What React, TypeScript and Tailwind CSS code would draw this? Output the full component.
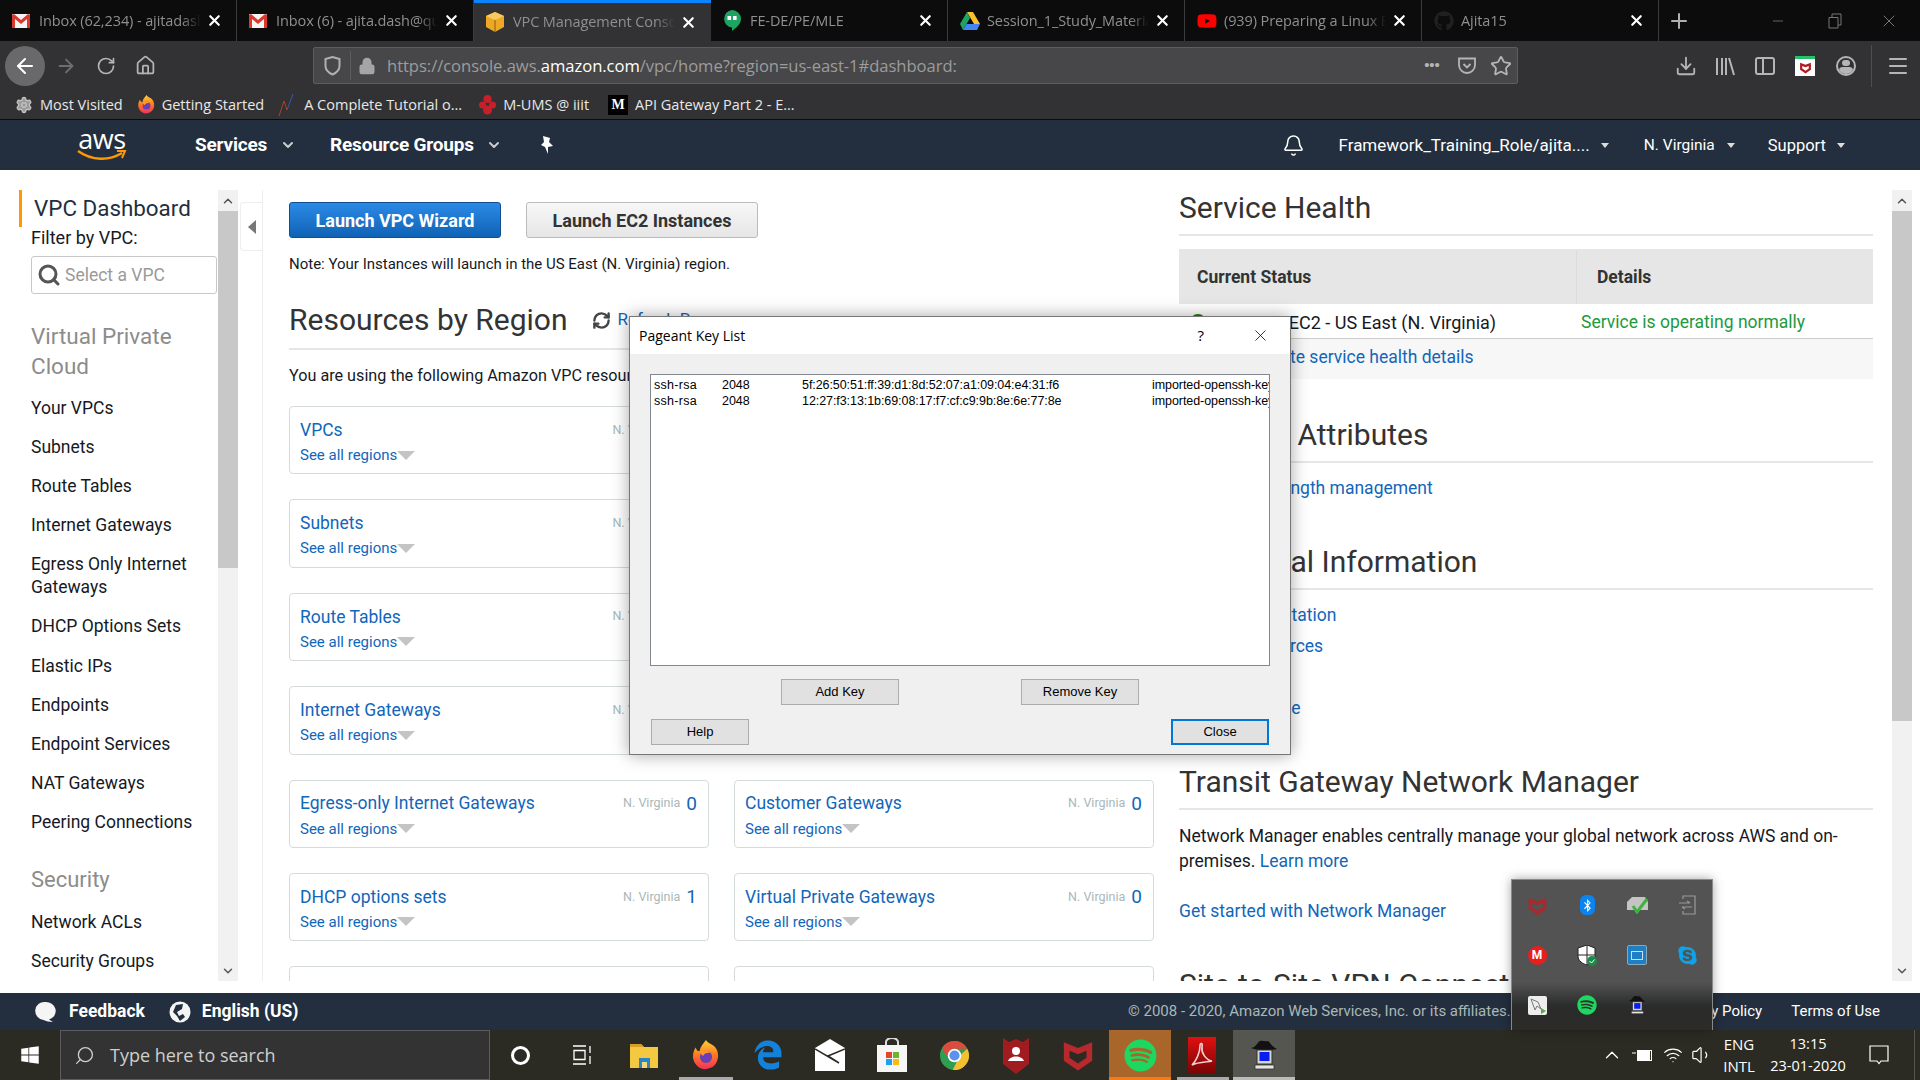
import React from "react";
import {
  ArrowLeft,
  ArrowRight,
  Bell,
  ChevronDown,
  ChevronUp,
  Download,
  Home,
  Lock,
  Menu,
  Minus,
  Plus,
  RefreshCw,
  RotateCw,
  Search,
  Settings,
  Star,
  Volume1,
  Wifi,
  X,
} from "lucide-react";
import { FaBluetoothB, FaGithub, FaSkype, FaSpotify, FaWindows, FaYoutube } from "react-icons/fa";
import { FaEdgeLegacy } from "react-icons/fa6";

function GmailIcon() {
  return (
    <svg width="18" height="16" viewBox="0 0 18 16">
      <rect x="0" y="1" width="18" height="14" rx="1" fill="#f4f4f4" />
      <path d="M0 2 L2 1 L9 7 L16 1 L18 2 V15 H15 V6 L9 11 L3 6 V15 H0Z" fill="#d93a30" />
    </svg>
  );
}

function CubeIcon() {
  return (
    <svg width="18" height="20" viewBox="0 0 18 20">
      <path d="M9 0 L18 4 V15 L9 20 L0 15 V4Z" fill="#eea825" />
      <path d="M9 0 L18 4 L9 8 L0 4Z" fill="#f7ca5e" />
      <path d="M9 8 V20" stroke="#8a5c10" strokeWidth="1" />
    </svg>
  );
}

function HangoutsIcon() {
  return (
    <svg width="18" height="21" viewBox="0 0 18 21">
      <path d="M9 0 A9 9 0 0 1 18 9 C18 14 13 18 9 21 V17.5 A8.8 8.8 0 0 1 9 0Z" fill="#1ea362" />
      <rect x="4.5" y="6" width="3.6" height="4" fill="#fff" />
      <rect x="10" y="6" width="3.6" height="4" fill="#fff" />
    </svg>
  );
}

function DriveIcon() {
  return (
    <svg width="20" height="18" viewBox="0 0 20 18">
      <path d="M7 0 H13 L20 12 H14Z" fill="#fbc02d" />
      <path d="M7 0 L0 12 L3 18 L10 6Z" fill="#1ea362" />
      <path d="M3 18 H17 L20 12 H6.5Z" fill="#4285f4" />
    </svg>
  );
}

function McAfeeShield({ size = 24, color = "#b92b2f" }: { size?: number; color?: string }) {
  return (
    <svg width={size} height={size} viewBox="0 0 24 24">
      <path
        fillRule="evenodd"
        d="M2 3 L12 7 L22 3 V16 L12 23 L2 16Z M6 9 V14 L12 18 L18 14 V9 L12 11.5Z"
        fill={color}
      />
    </svg>
  );
}

function FirefoxIcon({ size = 30, id }: { size?: number; id: string }) {
  return (
    <svg width={size} height={size} viewBox="0 0 30 32">
      <defs>
        <linearGradient id={id} x1="0" y1="0" x2="0" y2="1">
          <stop offset="0" stopColor="#ffd23a" />
          <stop offset="0.5" stopColor="#ff7a1f" />
          <stop offset="1" stopColor="#f0315f" />
        </linearGradient>
      </defs>
      <path d="M15 0 C17 4 22 4 25 8 C29 13 29 22 24 27 C19 32 10 33 5 27 C0 22 0 14 4 8 C5 11 6 12 8 12 C9 7 12 4 15 0Z" fill={`url(#${id})`} />
      <circle cx="15" cy="18" r="6.5" fill="#6a3fb5" />
      <path d="M9 12 C13 10 18 11 20 14 C17 13 13 14 12 17 C10 16 9 14 9 12Z" fill="#ff9a2a" />
    </svg>
  );
}

function PageantIcon({ size = 30 }: { size?: number }) {
  return (
    <svg width={size} height={size} viewBox="0 0 30 32">
      <path d="M2 9 C8 8 8 3 11 2 C14 1 16 3 19 2 C21 3 22 7 28 10 C20 12 9 12 2 9Z" fill="#111" />
      <rect x="8" y="11" width="15" height="14" fill="#d6d6d6" stroke="#333" strokeWidth="1" />
      <rect x="10.5" y="13" width="10" height="9" fill="#0a1df0" />
      <rect x="6" y="26" width="19" height="4" fill="#e4e4e4" stroke="#333" strokeWidth="0.8" />
    </svg>
  );
}

function AcrobatIcon() {
  return (
    <svg width="28" height="36" viewBox="0 0 28 36">
      <defs>
        <linearGradient id="acro" x1="0" y1="0" x2="0" y2="1">
          <stop offset="0" stopColor="#e01010" />
          <stop offset="1" stopColor="#7a0505" />
        </linearGradient>
      </defs>
      <rect width="28" height="36" fill="url(#acro)" />
      <path
        d="M4 28 C8 24 12 16 12 9 C12 5 15 6 14 10 C13 16 18 23 24 24 C20 25 10 25 4 28Z"
        fill="none"
        stroke="#f4d0d0"
        strokeWidth="1.6"
      />
    </svg>
  );
}

function ChromeIcon({ size = 28 }: { size?: number }) {
  return (
    <svg width={size} height={size} viewBox="0 0 32 32">
      <circle cx="16" cy="16" r="16" fill="#2f9e50" />
      <path d="M16 0 A16 16 0 0 1 30 8.5 L16 8.5 L6.5 16 L2.5 7.5 A16 16 0 0 1 16 0Z" fill="#dd4b3e" />
      <path d="M30 8.5 A16 16 0 0 1 14 32 L22 16 Z" fill="#f3c030" />
      <circle cx="16" cy="16" r="7.5" fill="#fff" />
      <circle cx="16" cy="16" r="5.6" fill="#5a93ef" />
    </svg>
  );
}

function FolderIcon() {
  return (
    <svg width="28" height="26" viewBox="0 0 28 26">
      <path d="M0 2 H11 L14 5 H28 V26 H0Z" fill="#f5c842" />
      <path d="M0 2 H11 L14 5 H0Z" fill="#d6a022" />
      <rect x="9" y="16" width="11" height="10" fill="#2a86c8" />
      <rect x="12" y="20" width="5" height="6" fill="#f5d775" />
    </svg>
  );
}

function StoreIcon() {
  return (
    <svg width="30" height="34" viewBox="0 0 30 34">
      <path d="M9 8 V4 A6 4 0 0 1 21 4 V8" fill="none" stroke="#ddd" strokeWidth="2" />
      <rect y="7" width="30" height="27" fill="#f6f6f6" />
      <rect x="9" y="14" width="6" height="6" fill="#e6452a" />
      <rect x="16" y="14" width="6" height="6" fill="#6fb52b" />
      <rect x="9" y="21" width="6" height="6" fill="#1ea1e8" />
      <rect x="16" y="21" width="6" height="6" fill="#fbbc10" />
    </svg>
  );
}

function MailIcon() {
  return (
    <svg width="30" height="32" viewBox="0 0 30 32">
      <path d="M0 9 L15 0 L30 9 V32 H0Z" fill="#fff" />
      <path d="M0 10 L24 24 L13 17 L30 10" fill="none" stroke="#2b2a22" strokeWidth="1.5" />
    </svg>
  );
}

function McAfeeUserIcon() {
  return (
    <svg width="26" height="38" viewBox="0 0 26 38">
      <path d="M0 2 L6 6 L13 3 L20 6 L26 2 V28 L13 38 L0 28Z" fill="#a01c20" />
      <circle cx="13" cy="15" r="4" fill="#fff" />
      <path d="M5 25 C7 19 19 19 21 25Z" fill="#fff" />
    </svg>
  );
}

function PocketIcon({ size = 20 }: { size?: number }) {
  return (
    <svg width={size} height={size} viewBox="0 0 20 20" fill="none" stroke="#b5b5b5" strokeWidth="1.8">
      <path d="M2 2.5 H18 V9 A8 8 0 0 1 2 9Z" />
      <path d="M6.5 8 L10 11.5 L13.5 8" />
    </svg>
  );
}

const tabs = [
  { icon: <GmailIcon />, title: "Inbox (62,234) - ajitadash" },
  { icon: <GmailIcon />, title: "Inbox (6) - ajita.dash@qua" },
  { icon: <CubeIcon />, title: "VPC Management Console", active: true },
  { icon: <HangoutsIcon />, title: "FE-DE/PE/MLE" },
  { icon: <DriveIcon />, title: "Session_1_Study_Material" },
  { icon: <FaYoutube className="text-[#f00] text-xl" />, title: "(939) Preparing a Linux E" },
  { icon: <FaGithub className="text-[#202020] text-xl" />, title: "Ajita15" },
];

const sideItems = [
  "Your VPCs",
  "Subnets",
  "Route Tables",
  "Internet Gateways",
  "Egress Only Internet Gateways",
  "DHCP Options Sets",
  "Elastic IPs",
  "Endpoints",
  "Endpoint Services",
  "NAT Gateways",
  "Peering Connections",
];

const cards = [
  ["VPCs", "10"],
  ["NAT Gateways", "0"],
  ["Subnets", "36"],
  ["VPC Peering Connections", "0"],
  ["Route Tables", "12"],
  ["Network ACLs", "1"],
  ["Internet Gateways", "10"],
  ["Security Groups", "2"],
  ["Egress-only Internet Gateways", "0"],
  ["Customer Gateways", "0"],
  ["DHCP options sets", "1"],
  ["Virtual Private Gateways", "0"],
  ["Elastic IPs", "0"],
  ["Site-to-Site VPN Connections", "0"],
];

function TabStrip() {
  return (
    <div className="h-[41px] bg-[#0c0c0c] flex font-['Open_Sans',sans-serif] text-[14.5px] tracking-[-0.1px] text-[#8f8f8f]">
      {tabs.map((t) => (
        <div
          key={t.title}
          className={
            t.active
              ? "w-[237px] h-full flex items-center pl-3 bg-[#323234] border-t-[3px] border-[#0a84ff] shrink-0"
              : "w-[237px] h-full flex items-center pl-3 border-r border-[#3c3c3c] shrink-0"
          }
        >
          <div className="w-[27px] shrink-0 flex items-center">{t.icon}</div>
          <div className="w-[162px] overflow-hidden whitespace-nowrap [mask-image:linear-gradient(90deg,#000_88%,transparent)]">{t.title}</div>
          <X size={17} strokeWidth={3} className="text-white ml-[5px] shrink-0" />
        </div>
      ))}
      <div className="flex-1 flex items-center text-[#b0b0b0]">
        <Plus size={24} strokeWidth={2} className="ml-2" />
        <Minus size={16} className="ml-[79px] text-[#777]" strokeWidth={1.2} />
        <svg width="14" height="16" viewBox="0 0 14 16" fill="none" stroke="#777" className="ml-[42px]">
          <path d="M4 4 V1 H13 V12 H10 M1 4.5 H10 V15 H1Z" />
        </svg>
        <X size={20} className="ml-[37px] text-[#777]" strokeWidth={1.2} />
      </div>
    </div>
  );
}

function Toolbar() {
  return (
    <div className="h-[49px] bg-[#323234] flex items-center text-[#b5b5b5]">
      <div className="w-10 h-10 ml-[5px] rounded-full bg-[#69696b] flex items-center justify-center text-white">
        <ArrowLeft size={24} strokeWidth={2} />
      </div>
      <ArrowRight size={22} className="ml-[10px] text-[#6e6e6e]" />
      <RotateCw size={20} className="ml-[19px]" />
      <Home size={21} className="ml-[19px]" />
      <div className="ml-[157px] w-[1205px] h-[37px] bg-[#474749] border border-[#5d5d5f] rounded-[2px] flex items-center">
        <svg width="17" height="20" viewBox="0 0 17 20" className="ml-[10px]" fill="none" stroke="#b0b0b0" strokeWidth="2">
          <path d="M1.5 3 L8.5 1 L15.5 3 V10 C15.5 14 12 17 8.5 18.5 C5 17 1.5 14 1.5 10Z" />
        </svg>
        <div className="w-px h-[29px] bg-[#5d5d5f] ml-[9px]" />
        <Lock size={18} fill="#a5a5a5" className="ml-[7px] text-[#a5a5a5]" />
        <div className="ml-[11px] text-[16.6px] pt-[2px] tracking-[-0.05px] text-[#9c9c9c] font-['Open_Sans',sans-serif] whitespace-nowrap">
          https://console.aws.<span className="text-white">amazon.com</span>/vpc/home?region=us-east-1#dashboard:
        </div>
        <div className="ml-auto flex items-center">
          <span className="text-[17px] font-bold leading-none tracking-[-1px]">•••</span>
          <span className="ml-[18px]">
            <PocketIcon />
          </span>
          <Star size={22} className="ml-[13px] mr-[5px]" />
        </div>
      </div>
      <div className="ml-[157px] flex items-center">
        <Download size={22} />
        <svg width="20" height="20" viewBox="0 0 20 20" stroke="#b5b5b5" strokeWidth="2" className="ml-[18px]">
          <path d="M2 2 V19 M7 2 V19 M11 2 V19 M14 2 L19 19" />
        </svg>
        <div className="ml-[20px] w-[20px] h-[18px] border-2 border-[#b5b5b5] rounded-[3px] flex">
          <div className="w-[7px] border-r-2 border-[#b5b5b5]" />
        </div>
        <div className="ml-[20px] w-[20px] h-[20px] bg-white border-t-[3px] border-[#25c06a] flex items-center justify-center">
          <McAfeeShield size={13} color="#b01c20" />
        </div>
        <div className="ml-[21px] w-[20px] h-[20px] rounded-full border-2 border-[#b5b5b5] flex flex-col items-center overflow-hidden">
          <div className="w-[8px] h-[8px] rounded-full bg-[#b5b5b5] mt-[2px]" />
          <div className="w-[14px] h-[8px] rounded-full bg-[#b5b5b5] mt-[1px]" />
        </div>
        <div className="ml-[15px] w-px h-[42px] bg-[#4e4e50]" />
        <Menu size={24} className="ml-[14px]" />
      </div>
    </div>
  );
}

function Bookmarks() {
  return (
    <div className="h-[30px] bg-[#323234] border-b border-[#0c0c0c] flex items-center text-[14.5px] text-[#e8e8e8] font-['Open_Sans',sans-serif] whitespace-nowrap">
      <Settings size={18} className="ml-[15px] text-[#c0c0c0]" fill="#999" />
      <span className="ml-[7px]">Most Visited</span>
      <span className="ml-[14px]">
        <FirefoxIcon size={19} id="ffbm" />
      </span>
      <span className="ml-[6px]">Getting Started</span>
      <svg width="16" height="24" viewBox="0 0 16 24" fill="none" strokeWidth="1" className="ml-[14px]">
        <path d="M1 23 L6 8 L9 17" stroke="#b04020" />
        <path d="M9 17 L15 1" stroke="#2a60b0" />
      </svg>
      <span className="ml-[10px]">A Complete Tutorial o...</span>
      <svg width="17" height="20" viewBox="0 0 17 20" className="ml-[17px]" fill="#c8202a">
        <circle cx="8.5" cy="4" r="4" />
        <circle cx="3.5" cy="10" r="3.5" />
        <circle cx="13.5" cy="10" r="3.5" />
        <circle cx="8.5" cy="15" r="4.5" />
      </svg>
      <span className="ml-[7px]">M-UMS @ iiit</span>
      <div className="ml-[19px] w-[20px] h-[20px] bg-black text-white font-['Liberation_Serif',serif] font-bold text-[14px] leading-[20px] text-center">
        M
      </div>
      <span className="ml-[7px]">API Gateway Part 2 - E...</span>
    </div>
  );
}

function TopNav() {
  const caret = <span className="inline-block w-0 h-0 border-x-[4px] border-x-transparent border-t-[5px] border-t-[#dcdcdc]" />;
  return (
    <div className="h-[50px] bg-[#232f3e] flex items-center text-white">
      <div className="ml-[76px] w-[52px] flex flex-col items-center">
        <span className="text-[27px] leading-[20px] font-['Open_Sans',sans-serif] tracking-[-0.5px]">aws</span>
        <svg width="50" height="12" viewBox="0 0 50 12" fill="none" stroke="#f90" strokeWidth="2.4">
          <path d="M1 2 C15 12 32 12 45 4" />
          <path d="M40 2 L48 2 L45 9" strokeWidth="2" />
        </svg>
      </div>
      <span className="ml-[67px] text-[19px] font-bold tracking-[-0.2px]">Services</span>
      <ChevronDown size={16} strokeWidth={3} className="ml-[13px] text-[#ccc]" />
      <span className="ml-[34px] text-[19px] font-bold tracking-[-0.2px]">Resource Groups</span>
      <ChevronDown size={16} strokeWidth={3} className="ml-[12px] text-[#ccc]" />
      <svg width="16" height="20" viewBox="0 0 16 20" fill="#fff" className="ml-[37px]">
        <path d="M4 1 L11 3 L10 7 L14 11 L9 12 L9 19 L6 12 L2 10 L5 7Z" />
      </svg>
      <Bell size={23} strokeWidth={1.6} className="ml-auto" />
      <span className="ml-[34px] text-[17px] pt-[2px]">Framework_Training_Role/ajita....</span>
      <span className="ml-[11px] flex">{caret}</span>
      <span className="ml-[35px] text-[15.5px] pt-[2px]">N. Virginia</span>
      <span className="ml-[12px] flex">{caret}</span>
      <span className="ml-[33px] text-[16.5px] pt-[2px]">Support</span>
      <span className="ml-[11px] flex">{caret}</span>
      <div className="w-[75px]" />
    </div>
  );
}

function ScrollBar({ thumb }: { thumb: string }) {
  return (
    <div className="w-5 h-full bg-[#f1f1f1] flex flex-col items-center shrink-0">
      <div className="h-[21px] flex items-center">
        <ChevronUp size={14} strokeWidth={2.5} className="text-[#555]" />
      </div>
      <div className={thumb} />
      <div className="flex-1" />
      <div className="h-[21px] flex items-center">
        <ChevronDown size={14} strokeWidth={2.5} className="text-[#555]" />
      </div>
    </div>
  );
}

function Sidebar() {
  return (
    <div className="w-[238px] h-full flex shrink-0 overflow-hidden">
      <div className="flex-1 min-w-0 overflow-hidden text-[#16191f]">
        <div className="ml-[19px] h-[37px] border-l-[3px] border-[#f90] pl-[12px] text-[22.4px] leading-[37px] text-[#232f3e]">
          VPC Dashboard
        </div>
        <div className="ml-[31px] text-[18px] leading-[22px] mt-0">Filter by VPC:</div>
        <div className="ml-[31px] mt-[7px] h-[38px] w-[186px] border border-[#c8c8c8] rounded-[3px] flex items-center text-[#9a9a9a] text-[17.5px]">
          <Search size={24} strokeWidth={3} className="ml-[5px] text-[#555]" />
          <span className="ml-[4px]">Select a VPC</span>
        </div>
        <div className="ml-[31px] mt-[27px] text-[22.5px] leading-[30px] text-[#8c8c8c]">
          Virtual Private
          <br />
          Cloud
        </div>
        <div className="ml-[31px] mt-[16px] text-[17.5px] leading-[23px]">
          {sideItems.map((s) => (
            <div key={s} className="mb-[16.1px]">
              {s}
            </div>
          ))}
          <div className="text-[22px] leading-[28px] text-[#8c8c8c] mt-[32px] mb-[17px]">Security</div>
          <div className="mb-[16.1px]">Network ACLs</div>
          <div className="mb-[16.1px]">Security Groups</div>
        </div>
      </div>
      <ScrollBar thumb="w-full h-[357px] bg-[#c8c8c8]" />
    </div>
  );
}

function RegionCard({ title, count }: { title: string; count: string }) {
  return (
    <div className="h-[68.4px] border border-[#d5dbdb] rounded-[4px] pl-[10px] pr-[11px] pt-[12px]">
      <div className="flex items-center h-[22px]">
        <span className="text-[17.5px] text-[#1166bb]">{title}</span>
        <span className="ml-auto text-[12.5px] text-[#aab7b8]">N. Virginia</span>
        <span className="ml-[6px] text-[19px] text-[#1166bb] leading-none">{count}</span>
      </div>
      <div className="flex items-center mt-[3px] pt-px text-[15px] leading-[20px] text-[#1166bb]">
        See all regions
        <span className="w-0 h-0 border-x-[9px] border-x-transparent border-t-[9px] border-t-[#c4c4c4]" />
      </div>
    </div>
  );
}

function MainColumn() {
  return (
    <div className="w-[865px] ml-[26px] shrink-0 overflow-hidden h-full text-[#16191f]">
      <div className="flex mt-3">
        <div className="w-[212px] h-9 pt-px rounded-[3px] border border-[#0f4e93] bg-gradient-to-b from-[#2b8ae6] to-[#0f63b5] text-white font-bold text-[18px] flex items-center justify-center">
          Launch VPC Wizard
        </div>
        <div className="ml-[25px] w-[232px] h-9 pt-px rounded-[3px] border border-[#bbb] bg-gradient-to-b from-[#f7f7f7] to-[#e6e6e6] text-[#333] font-bold text-[18px] flex items-center justify-center">
          Launch EC2 Instances
        </div>
      </div>
      <div className="mt-4 text-[15px] leading-5">Note: Your Instances will launch in the US East (N. Virginia) region.</div>
      <div className="mt-7 pb-[10px] border-b-2 border-[#e6e6e6] flex items-center">
        <span className="text-[30px] leading-9 text-[#333]">Resources by Region</span>
        <RefreshCw size={19} strokeWidth={3} className="ml-[25px] text-[#444]" />
        <span className="ml-[6px] text-[17px] text-[#1166bb]">Refresh Resources</span>
      </div>
      <div className="mt-4 text-[16.2px] leading-5">You are using the following Amazon VPC resources</div>
      <div className="mt-5 grid grid-cols-2 gap-x-[25px] gap-y-[25px]">
        {cards.map(([title, count]) => (
          <RegionCard key={title} title={title} count={count} />
        ))}
      </div>
    </div>
  );
}

function SectionHeading({ children, className }: { children: React.ReactNode; className: string }) {
  return <div className={className + " text-[30px] leading-9 text-[#333] border-b-2 border-[#e6e6e6] whitespace-nowrap"}>{children}</div>;
}

function RightColumn() {
  const link = "text-[#1166bb] text-[17.5px] leading-6";
  return (
    <div className="w-[694px] ml-[25px] shrink-0 overflow-hidden h-full text-[#16191f]">
      <SectionHeading className="pb-2">Service Health</SectionHeading>
      <div className="mt-[13px] h-[55px] pt-px bg-[#e6e6e6] flex items-center font-bold text-[17.5px] text-[#333]">
        <div className="w-[398px] h-full pl-[18px] flex items-center border-r border-[#dcdcdc]">Current Status</div>
        <div className="pl-5">Details</div>
      </div>
      <div className="h-[35px] pt-[2px] border-b border-[#ccc] flex items-center text-[18px]">
        <div className="w-[398px] pl-[11px] flex items-center">
          <span className="w-4 h-4 rounded-full bg-[#1d8102] mr-[12px]" />
          Amazon EC2 - US East (N. Virginia)
        </div>
        <div className="pl-[4px] text-[17.5px] text-[#1d9a3c]">Service is operating normally</div>
      </div>
      <div className="h-[40px] pb-[4px] bg-[#f7f7f7] flex items-center pl-[11px] text-[#1166bb] text-[17.5px]">
        View complete service health details
      </div>
      <SectionHeading className="mt-[38px] pb-2">Account Attributes</SectionHeading>
      <div className={link + " mt-[13px]"}>Resource ID length management</div>
      <SectionHeading className="mt-[44px] pb-[8px]">Additional Information</SectionHeading>
      <div className="mt-[13px] flex flex-col gap-[7px]">
        <div className={link}>VPC Documentation</div>
        <div className={link}>All VPC Resources</div>
        <div className={link}>Forums</div>
        <div className={link}>Report an Issue</div>
      </div>
      <SectionHeading className="mt-[44px] pb-[8px]">Transit Gateway Network Manager</SectionHeading>
      <div className="mt-[14px] text-[17.5px] leading-[25px]">
        Network Manager enables centrally manage your global network across AWS and on-premises.{" "}
        <span className="text-[#1166bb]">Learn more</span>
      </div>
      <div className={link + " mt-[25px]"}>Get started with Network Manager</div>
      <div className="mt-[44px] text-[30px] leading-9 text-[#333]">Site-to-Site VPN Connections</div>
    </div>
  );
}

function Content() {
  return (
    <div className="h-[823px] bg-white pt-5 pb-3 flex">
      <Sidebar />
      <div className="w-[25px] h-full shrink-0 border-r border-[#eee] pl-[2px] pt-3">
        <div className="w-[23px] h-[49px] border border-r-0 border-[#eee] rounded-l-[4px] flex items-center justify-center">
          <span className="w-0 h-0 border-y-[7px] border-y-transparent border-r-[8px] border-r-[#777]" />
        </div>
      </div>
      <MainColumn />
      <RightColumn />
      <div className="w-[19px] shrink-0" />
      <ScrollBar thumb="w-full h-[510px] bg-[#c8c8c8]" />
    </div>
  );
}

function Footer() {
  return (
    <div className="h-[37px] bg-[#232f3e] flex items-center text-white whitespace-nowrap">
      <div className="w-[1128px] shrink-0 flex items-center">
        <svg width="22" height="22" viewBox="0 0 22 22" fill="#f5f5f5" className="ml-[34px] shrink-0">
          <path d="M11 1 A9.8 9 0 0 1 15 18.5 L19 21 C15 21 12 20 9.5 19 A9 9 0 0 1 11 1Z" />
        </svg>
        <span className="ml-[13px] font-bold text-[17.5px]">Feedback</span>
        <svg width="22" height="22" viewBox="0 0 22 22" className="ml-[24px] shrink-0">
          <circle cx="11" cy="11" r="10.5" fill="#f5f5f5" />
          <path d="M7 4 L14 3 L13 8 L8 11 L10 15 L14 13 L16 16 L11 20 L8 15 L4 11Z" fill="#232f3e" />
        </svg>
        <span className="ml-[11px] font-bold text-[17.5px]">English (US)</span>
      </div>
      <span className="w-[500px] overflow-hidden shrink-0 text-[#aab7b8] text-[15px]">© 2008 - 2020, Amazon Web Services, Inc. or its affiliates. All rights reserved.</span>
      <span className="ml-auto text-[15px]">Privacy Policy</span>
      <span className="ml-[29px] mr-[40px] text-[15px]">Terms of Use</span>
    </div>
  );
}

function TaskCell({ children, className }: { children: React.ReactNode; className?: string }) {
  return <div className={"w-[62px] h-full flex items-center justify-center relative " + (className ?? "")}>{children}</div>;
}

function Taskbar() {
  return (
    <div className="h-[50px] bg-[#2c2b23] flex items-center text-white font-['Open_Sans',sans-serif]">
      <FaWindows className="ml-[20px] text-[20px]" />
      <div className="ml-[20px] w-[430px] h-full bg-[#333] border border-[#5c5c5c] flex items-center text-[#cfcfcf] text-[18px]">
        <Search size={21} strokeWidth={1.5} className="ml-[13px] -scale-x-100" />
        <span className="ml-[15px]">Type here to search</span>
      </div>
      <div className="h-full flex -ml-px">
        <TaskCell>
          <div className="w-[19px] h-[19px] rounded-full border-[3px] border-white" />
        </TaskCell>
        <TaskCell>
          <svg width="20" height="20" viewBox="0 0 20 20" stroke="#fff" strokeWidth="1.3" fill="none">
            <path d="M1 1 H14 M1 19 H14 M2 5.5 H13 V14.5 H2Z M18 1 V8 M18 11 V19" />
          </svg>
        </TaskCell>
        <TaskCell>
          <FolderIcon />
        </TaskCell>
        <TaskCell>
          <FirefoxIcon size={30} id="fftb" />
          <div className="absolute bottom-0 left-[4px] right-[4px] h-[3px] bg-[#aaa]" />
        </TaskCell>
        <TaskCell>
          <FaEdgeLegacy className="text-[#1382dc] text-[30px]" />
        </TaskCell>
        <TaskCell>
          <MailIcon />
        </TaskCell>
        <TaskCell>
          <StoreIcon />
        </TaskCell>
        <TaskCell>
          <ChromeIcon size={29} />
        </TaskCell>
        <TaskCell>
          <McAfeeUserIcon />
        </TaskCell>
        <TaskCell>
          <McAfeeShield size={34} color="#b8292d" />
        </TaskCell>
        <TaskCell className="bg-[#a8662b]">
          <FaSpotify className="text-[#1ed760] text-[33px]" />
          <div className="absolute bottom-0 inset-x-0 h-[3px] bg-[#f97a12]" />
        </TaskCell>
        <TaskCell>
          <AcrobatIcon />
          <div className="absolute bottom-0 left-[6px] right-[4px] h-[3px] bg-[#aaa]" />
        </TaskCell>
        <TaskCell className="bg-[#565650]">
          <PageantIcon size={32} />
          <div className="absolute bottom-0 inset-x-0 h-[3px] bg-[#bbb]" />
        </TaskCell>
      </div>
      <div className="ml-auto flex items-center h-full">
        <ChevronUp size={22} strokeWidth={1.4} />
        <svg width="21" height="16" viewBox="0 0 21 16" className="ml-[9px]" fill="none" stroke="#fff">
          <rect x="5.5" y="3.5" width="14" height="10" />
          <rect x="5.5" y="3.5" width="12" height="10" fill="#fff" />
          <path d="M0 6 H4" />
        </svg>
        <Wifi size={20} strokeWidth={1.4} className="ml-[10px]" />
        <Volume1 size={22} strokeWidth={1.3} className="ml-[8px]" />
        <div className="ml-[10px] w-[32px] text-[15px] leading-[22px] text-center">
          ENG
          <br />
          INTL
        </div>
        <div className="ml-[14px] text-[14.5px] leading-[22px] text-center w-[78px]">
          13:15
          <br />
          23-01-2020
        </div>
        <svg width="20" height="20" viewBox="0 0 20 20" fill="none" stroke="#fff" strokeWidth="1.2" className="ml-[22px]">
          <path d="M1 1 H19 V16 H12 L10 18.5 L8 16 H1Z" />
        </svg>
        <div className="ml-[25px] mr-[5px] w-px h-full bg-[#555]" />
      </div>
    </div>
  );
}

function PageantDialog() {
  const rows = [
    ["ssh-rsa", "2048", "5f:26:50:51:ff:39:d1:8d:52:07:a1:09:04:e4:31:f6", "imported-openssh-key"],
    ["ssh-rsa", "2048", "12:27:f3:13:1b:69:08:17:f7:cf:c9:9b:8e:6e:77:8e", "imported-openssh-key"],
  ];
  const btn = "h-[26px] bg-[#e1e1e1] border border-[#adadad] flex items-center justify-center";
  return (
    <div className="absolute left-[629px] top-[316px] w-[662px] h-[439px] bg-[#f0f0f0] border border-[#777] shadow-[0_0_16px_rgba(0,0,0,0.35)] font-['Liberation_Sans',sans-serif] text-[13px] text-black">
      <div className="h-[37px] bg-white flex items-center pl-[9px] font-['Open_Sans',sans-serif] text-[14px]">
        Pageant Key List
        <span className="ml-auto text-[15px]">?</span>
        <X size={19} strokeWidth={1} className="ml-[47px] mr-[20px]" />
      </div>
      <div className="px-[20px] pt-[20px]">
        <div className="h-[292px] bg-white border border-[#828790] pt-[2px] overflow-hidden">
          {rows.map((r) => (
            <div key={r[2]} className="flex h-[16px] leading-[16px] text-[12.5px] tracking-[-0.07px] pl-[3px] whitespace-nowrap">
              <span className="w-[68px] tracking-[0.3px]">{r[0]}</span>
              <span className="w-[80px]">{r[1]}</span>
              <span className="w-[350px]">{r[2]}</span>
              <span className="w-[117px] overflow-hidden">{r[3]}</span>
            </div>
          ))}
        </div>
        <div className="flex mt-[13px] pl-[131px]">
          <div className={btn + " w-[118px]"}>Add Key</div>
          <div className={btn + " w-[118px] ml-[122px]"}>Remove Key</div>
        </div>
        <div className="flex mt-[14px] justify-between px-px">
          <div className={btn + " w-[98px]"}>Help</div>
          <div className={btn + " w-[98px] !border-2 !border-[#0078d7]"}>Close</div>
        </div>
      </div>
    </div>
  );
}

function TrayPopup() {
  const cell = "flex items-center justify-center h-[50px] w-[50px]";
  return (
    <div className="absolute left-[1511px] top-[879px] w-[202px] h-[151px] border border-b-0 border-[#8a8a8a] bg-[linear-gradient(#535353_0%,#535353_68%,#2a2b2b_84%,#2b2b27_100%)] shadow-[0_0_10px_rgba(0,0,0,0.35)]">
      <div className="grid grid-cols-4">
        <div className={cell}>
          <McAfeeShield size={21} color="#a82a2d" />
        </div>
        <div className={cell}>
          <div className="w-[15px] h-[20px] rounded-[6px] bg-[#0a84f0] flex items-center justify-center text-white text-[13px]">
            <FaBluetoothB />
          </div>
        </div>
        <div className={cell}>
          <svg width="21" height="18" viewBox="0 0 21 18">
            <path d="M0 6 L5 1 H18 L21 6 V14 H0Z" fill="#c4c4c4" />
            <path d="M6 10 L10 16 L20 3" fill="none" stroke="#3cb43c" strokeWidth="3" />
          </svg>
        </div>
        <div className={cell}>
          <svg width="18" height="20" viewBox="0 0 18 20" fill="none" stroke="#9a9a9a" strokeWidth="1.2">
            <path d="M5 4 V1 H17 V19 H5 V16 M1 8 H12 M9 6 L12 8 M4 12 H14 M4 12 L7 14" />
          </svg>
        </div>
        <div className={cell}>
          <div className="w-[19px] h-[19px] rounded-full bg-[#e8201c] text-white text-[12px] font-bold leading-[19px] text-center">M</div>
        </div>
        <div className={cell}>
          <svg width="20" height="21" viewBox="0 0 20 21">
            <path d="M1 3 L10 0 L18 3 V11 C18 16 13 19 10 20 C6 19 1 16 1 11Z" fill="#fff" stroke="#222" />
            <path d="M10 0 V20 M1 10 H18" stroke="#222" />
            <circle cx="15" cy="16" r="5" fill="#1d8a4a" />
            <path d="M12.5 16 L14.5 18 L17.5 14.5" stroke="#fff" fill="none" />
          </svg>
        </div>
        <div className={cell}>
          <div className="w-[20px] h-[20px] bg-[#1f7fc4] border border-[#8ab] rounded-[2px] flex items-center justify-center">
            <div className="w-[12px] h-[9px] border border-[#cde]" />
          </div>
        </div>
        <div className={cell}>
          <FaSkype className="text-[#0ea2e8] text-[21px]" />
        </div>
        <div className={cell}>
          <svg width="19" height="19" viewBox="0 0 19 19">
            <rect width="19" height="19" rx="2" fill="#eee" />
            <path d="M3 3 L10 6 L13 13 L9 10 L7 14Z" fill="none" stroke="#777" />
            <path d="M13 12 L18 15 L13 18Z" fill="#52b043" />
          </svg>
        </div>
        <div className={cell}>
          <FaSpotify className="text-[#1ed760] text-[20px]" />
        </div>
        <div className={cell}>
          <PageantIcon size={20} />
        </div>
      </div>
    </div>
  );
}

export default function App() {
  return (
    <div className="relative w-[1920px] h-[1080px] overflow-hidden font-['Roboto',sans-serif] bg-white">
      <TabStrip />
      <Toolbar />
      <Bookmarks />
      <TopNav />
      <Content />
      <Footer />
      <Taskbar />
      <PageantDialog />
      <TrayPopup />
    </div>
  );
}
